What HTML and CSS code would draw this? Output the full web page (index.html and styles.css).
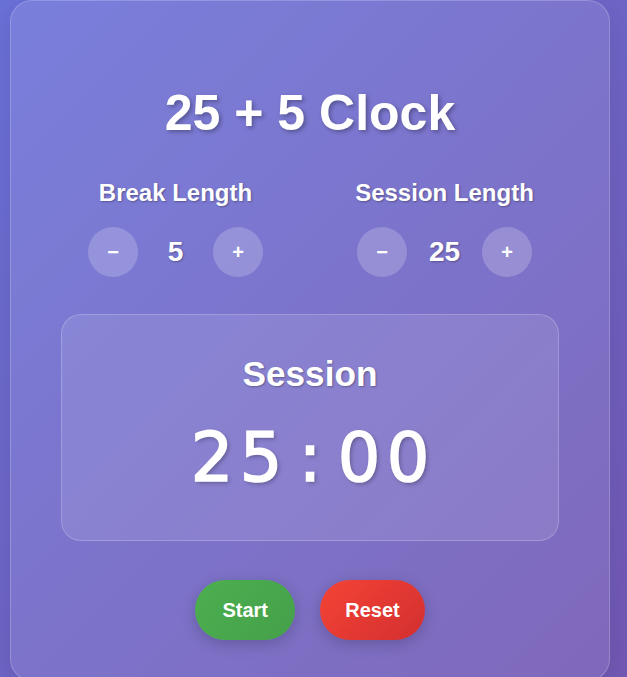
FILE: index.html
```html
<!DOCTYPE html>
<html lang="en">
<head>
<meta charset="utf-8">
<title>25 + 5 Clock</title>
<link rel="stylesheet" href="styles.css">
</head>
<body>
  <main class="card">
    <h1 class="title">25 + 5 Clock</h1>
    <div class="settings">
      <section class="setting">
        <h2 class="setting-label">Break Length</h2>
        <div class="controls">
          <button class="round-btn" type="button">−</button>
          <span class="value">5</span>
          <button class="round-btn" type="button">+</button>
        </div>
      </section>
      <section class="setting">
        <h2 class="setting-label">Session Length</h2>
        <div class="controls">
          <button class="round-btn" type="button">−</button>
          <span class="value">25</span>
          <button class="round-btn" type="button">+</button>
        </div>
      </section>
    </div>
    <div class="display">
      <div class="timer-label">Session</div>
      <div class="time-left"><span class="ch">2</span><span class="ch">5</span><span class="ch">:</span><span class="ch">0</span><span class="ch">0</span></div>
    </div>
    <div class="actions">
      <button class="action start" type="button">Start</button>
      <button class="action reset" type="button">Reset</button>
    </div>
  </main>
</body>
</html>
```
FILE: styles.css
```css
html, body {
  margin: 0;
  padding: 0;
  height: 100%;
  overflow: hidden;
}

body {
  background: linear-gradient(135deg, #6a71d8 0%, #7258b4 100%);
  font-family: "Liberation Sans", Arial, sans-serif;
  color: #fff;
}

.card {
  box-sizing: border-box;
  width: 600px;
  margin-left: 10px;
  padding: 40px;
  background: rgba(255, 255, 255, 0.1);
  border: 1px solid rgba(255, 255, 255, 0.2);
  border-radius: 22px;
  box-shadow: 0 8px 32px rgba(0, 0, 0, 0.1);
}

.title {
  margin: 47px 0 0;
  font-size: 50px;
  line-height: 50px;
  font-weight: bold;
  text-align: center;
  text-shadow: 2px 2px 4px rgba(0, 0, 0, 0.3);
}

.settings {
  display: grid;
  grid-template-columns: 1fr 1fr;
  gap: 20px;
  margin-top: 43px;
}

.setting {
  display: flex;
  flex-direction: column;
  align-items: center;
}

.setting-label {
  margin: 0;
  font-size: 24px;
  line-height: 24px;
  font-weight: bold;
  text-shadow: 1px 1px 2px rgba(0, 0, 0, 0.3);
}

.controls {
  display: flex;
  align-items: center;
  gap: 15px;
  margin-top: 22px;
}

.round-btn {
  width: 50px;
  height: 50px;
  padding: 0;
  border: none;
  border-radius: 50%;
  background: rgba(255, 255, 255, 0.2);
  color: #fff;
  font-family: "Liberation Sans", Arial, sans-serif;
  font-size: 20px;
  font-weight: bold;
  line-height: 50px;
}

.value {
  min-width: 45px;
  text-align: center;
  font-size: 28px;
  line-height: 32px;
  font-weight: bold;
  text-shadow: 1px 1px 2px rgba(0, 0, 0, 0.3);
}

.display {
  margin: 37px 10px 0;
  padding: 41px 20px 46px;
  background: rgba(255, 255, 255, 0.1);
  border: 1px solid rgba(255, 255, 255, 0.2);
  border-radius: 20px;
  text-align: center;
}

.timer-label {
  font-size: 35.2px;
  line-height: 35px;
  font-weight: bold;
  text-shadow: 1px 1px 2px rgba(0, 0, 0, 0.3);
}

.time-left {
  display: flex;
  justify-content: center;
  margin-top: 31px;
  font-family: "DejaVu Sans", sans-serif;
  font-size: 67px;
  line-height: 72px;
  text-shadow: 2px 2px 4px rgba(0, 0, 0, 0.3);
  -webkit-text-stroke: 1.6px #fff;
}

.ch {
  width: 49px;
  text-align: center;
}

.actions {
  display: flex;
  justify-content: center;
  gap: 25px;
  margin-top: 39px;
}

.action {
  min-width: 100px;
  height: 60px;
  padding: 0 25px;
  border: none;
  border-radius: 30px;
  color: #fff;
  font-family: "Liberation Sans", Arial, sans-serif;
  font-size: 20px;
  font-weight: bold;
  box-shadow: 0 4px 15px rgba(0, 0, 0, 0.2);
}

.start {
  background: linear-gradient(135deg, #4caf50, #45a049);
}

.reset {
  background: linear-gradient(135deg, #f44336, #d32f2f);
}
```
